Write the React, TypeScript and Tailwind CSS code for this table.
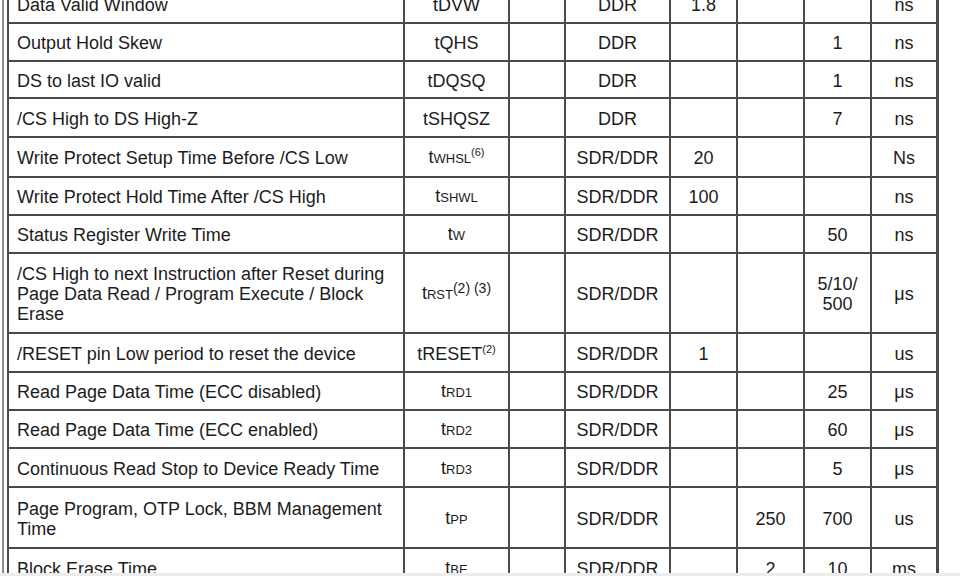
import type { ReactNode } from "react";

type Row = {
  param: ReactNode;
  symbol: ReactNode;
  mode: string;
  min?: ReactNode;
  typ?: ReactNode;
  max?: ReactNode;
  unit: string;
  h: string;
};

const Sym = ({ sub, sup, big }: { sub: string; sup?: string; big?: boolean }) => (
  <span>
    t<span className={big ? "" : "text-[13px]"}>{sub}</span>
    {sup && <sup className="text-[11px] -top-[7px]">{sup}</sup>}
  </span>
);

const rows: Row[] = [
  { param: "Data Valid Window", symbol: <Sym sub="DVW" big />, mode: "DDR", min: "1.8", unit: "ns", h: "h-[36px]" },
  { param: "Output Hold Skew", symbol: <Sym sub="QHS" big />, mode: "DDR", max: "1", unit: "ns", h: "h-[36px]" },
  { param: "DS to last IO valid", symbol: <Sym sub="DQSQ" big />, mode: "DDR", max: "1", unit: "ns", h: "h-[35px]" },
  { param: "/CS High to DS High-Z", symbol: <Sym sub="SHQSZ" big />, mode: "DDR", max: "7", unit: "ns", h: "h-[37px]" },
  { param: "Write Protect Setup Time Before /CS Low", symbol: <Sym sub="WHSL" sup="(6)" />, mode: "SDR/DDR", min: "20", unit: "Ns", h: "h-[38px]" },
  { param: "Write Protect Hold Time After /CS High", symbol: <Sym sub="SHWL" />, mode: "SDR/DDR", min: "100", unit: "ns", h: "h-[36px]" },
  { param: "Status Register Write Time", symbol: <Sym sub="W" />, mode: "SDR/DDR", max: "50", unit: "ns", h: "h-[36px]" },
  {
    param: (
      <>
        /CS High to next Instruction after Reset during
        <br />
        Page Data Read / Program Execute / Block
        <br />
        Erase
      </>
    ),
    symbol: (
      <span>
        t<span className="text-[13px]">RST</span>
        <sup className="text-[14px] -top-[6px]">(2) (3)</sup>
      </span>
    ),
    mode: "SDR/DDR",
    max: (
      <>
        5/10/
        <br />
        500
      </>
    ),
    unit: "μs",
    h: "h-[78px]",
  },
  { param: "/RESET pin Low period to reset the device", symbol: <Sym sub="RESET" sup="(2)" big />, mode: "SDR/DDR", min: "1", unit: "us", h: "h-[37px]" },
  { param: "Read Page Data Time (ECC disabled)", symbol: <Sym sub="RD1" />, mode: "SDR/DDR", max: "25", unit: "μs", h: "h-[36px]" },
  { param: "Read Page Data Time (ECC enabled)", symbol: <Sym sub="RD2" />, mode: "SDR/DDR", max: "60", unit: "μs", h: "h-[36px]" },
  { param: "Continuous Read Stop to Device Ready Time", symbol: <Sym sub="RD3" />, mode: "SDR/DDR", max: "5", unit: "μs", h: "h-[37px]" },
  {
    param: (
      <>
        Page Program, OTP Lock, BBM Management
        <br />
        Time
      </>
    ),
    symbol: <Sym sub="PP" />,
    mode: "SDR/DDR",
    typ: "250",
    max: "700",
    unit: "us",
    h: "h-[59px]",
  },
  { param: "Block Erase Time", symbol: <Sym sub="BE" />, mode: "SDR/DDR", typ: "2", max: "10", unit: "ms", h: "h-[38px]" },
];

export default function App() {
  return (
    <div className="w-[960px] h-[576px] bg-white border-b-[3px] border-[#ececec] overflow-hidden font-['Liberation_Sans',Arial,sans-serif] text-[18px] leading-[20px] text-[#1c1c1c]">
      <div className="ml-[2px] h-[573px] w-fit border-l-2 border-[#8c8c8c] pl-[3px] overflow-hidden">
        <div className="-mt-[16px] grid grid-cols-[394px_103px_54px_103px_65px_65px_65px_64px] gap-[2px] bg-[#4a4a4a] pt-[2px] pl-[2px] pr-[3px] pb-[2px]">
          {rows.map((r, i) => (
            <div key={i} className="contents">
              <div className={`${r.h} bg-white flex items-center pl-2 pt-[2px]`}>
                <span>{r.param}</span>
              </div>
              <div className="bg-white flex items-center justify-center pt-[2px]">{r.symbol}</div>
              <div className="bg-white" />
              <div className="bg-white flex items-center justify-center pt-[2px]">{r.mode}</div>
              <div className="bg-white flex items-center justify-center pt-[2px]">{r.min}</div>
              <div className="bg-white flex items-center justify-center pt-[2px]">{r.typ}</div>
              <div className="bg-white flex items-center justify-center text-center pt-[2px]">{r.max}</div>
              <div className="bg-white flex items-center justify-center pt-[2px]">{r.unit}</div>
            </div>
          ))}
        </div>
      </div>
    </div>
  );
}
